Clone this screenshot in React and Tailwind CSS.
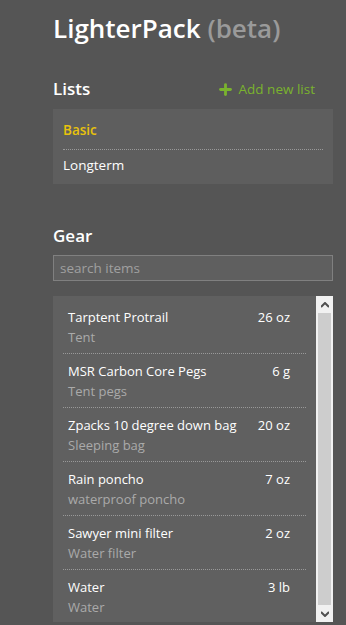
import { Plus } from "lucide-react";

const gear = [
  { name: "Tarptent Protrail", desc: "Tent", weight: "26 oz" },
  { name: "MSR Carbon Core Pegs", desc: "Tent pegs", weight: "6 g" },
  { name: "Zpacks 10 degree down bag", desc: "Sleeping bag", weight: "20 oz" },
  { name: "Rain poncho", desc: "waterproof poncho", weight: "7 oz" },
  { name: "Sawyer mini filter", desc: "Water filter", weight: "2 oz" },
  { name: "Water", desc: "Water", weight: "3 lb" },
];

function GearItem({ item, last }) {
  return (
    <div
      className={`px-[5px] pt-[7px] pb-[5px] ${
        last ? "" : "border-b border-dotted border-[#999]"
      }`}
    >
      <div className="flex justify-between gap-2 whitespace-nowrap pr-[11px] leading-[20px] text-[13px] text-white">
        <span>{item.name}</span>
        <span>{item.weight}</span>
      </div>
      <div className="leading-[21px] text-[13px] text-[#aaa]">{item.desc}</div>
    </div>
  );
}

export default function App() {
  return (
    <div
      className="min-h-screen bg-[#555555] pl-[53px] pr-[13px] pt-[10px]"
      style={{ fontFamily: '"Open Sans", "Liberation Sans", sans-serif' }}
    >
      {/* Title */}
      <h1 className="text-[26px] leading-[36px] font-semibold text-white">
        LighterPack <span className="text-[#9a9a9a]">(beta)</span>
      </h1>

      {/* Lists */}
      <div className="mt-[31px] flex items-center justify-between">
        <h2 className="text-[17px] leading-[24px] font-semibold text-white">Lists</h2>
        <button className="flex items-center gap-[5px] pr-[18px] text-[13.5px] text-[#7ab32e]">
          <Plus size={17} strokeWidth={4} />
          Add new list
        </button>
      </div>
      <div className="mt-[8px] bg-[#5e5e5e] px-[10px] py-[6px] text-[13.5px] leading-[20px]">
        <div className="border-b border-dotted border-[#999] pt-[5px] pb-[9px] font-semibold text-[#e8c20c]">
          Basic
        </div>
        <div className="pt-[5px] pb-[3px] text-white">Longterm</div>
      </div>

      {/* Gear */}
      <h2 className="mt-[40px] text-[17px] leading-[24px] font-semibold text-white">Gear</h2>
      <input
        placeholder="search items"
        className="mt-[7px] block h-[26px] w-full border border-[#808080] bg-[#5f5f5f] px-[6px] text-[13.5px] text-white placeholder:text-[#a0a0a0] outline-none"
      />
      <div className="mt-[15px] flex h-[326px] bg-[#606060]">
        <div className="flex-1 overflow-hidden pl-[10px] pr-[10px] pt-[4px]">
          {gear.map((item, i) => (
            <GearItem key={item.name} item={item} last={i === gear.length - 1} />
          ))}
        </div>
        <div className="flex w-[17px] flex-col bg-[#f1f1f1]">
          <div className="flex h-[17px] items-center justify-center">
            <svg width="8" height="6" viewBox="0 0 8 6">
              <path d="M0 5 L4 1 L8 5" stroke="#505050" strokeWidth="2" fill="none" />
            </svg>
          </div>
          <div className="mx-[2px] flex-1 bg-[#cdcdcd]" />
          <div className="flex h-[17px] items-center justify-center">
            <svg width="8" height="6" viewBox="0 0 8 6">
              <path d="M0 1 L4 5 L8 1" stroke="#505050" strokeWidth="2" fill="none" />
            </svg>
          </div>
        </div>
      </div>
    </div>
  );
}
